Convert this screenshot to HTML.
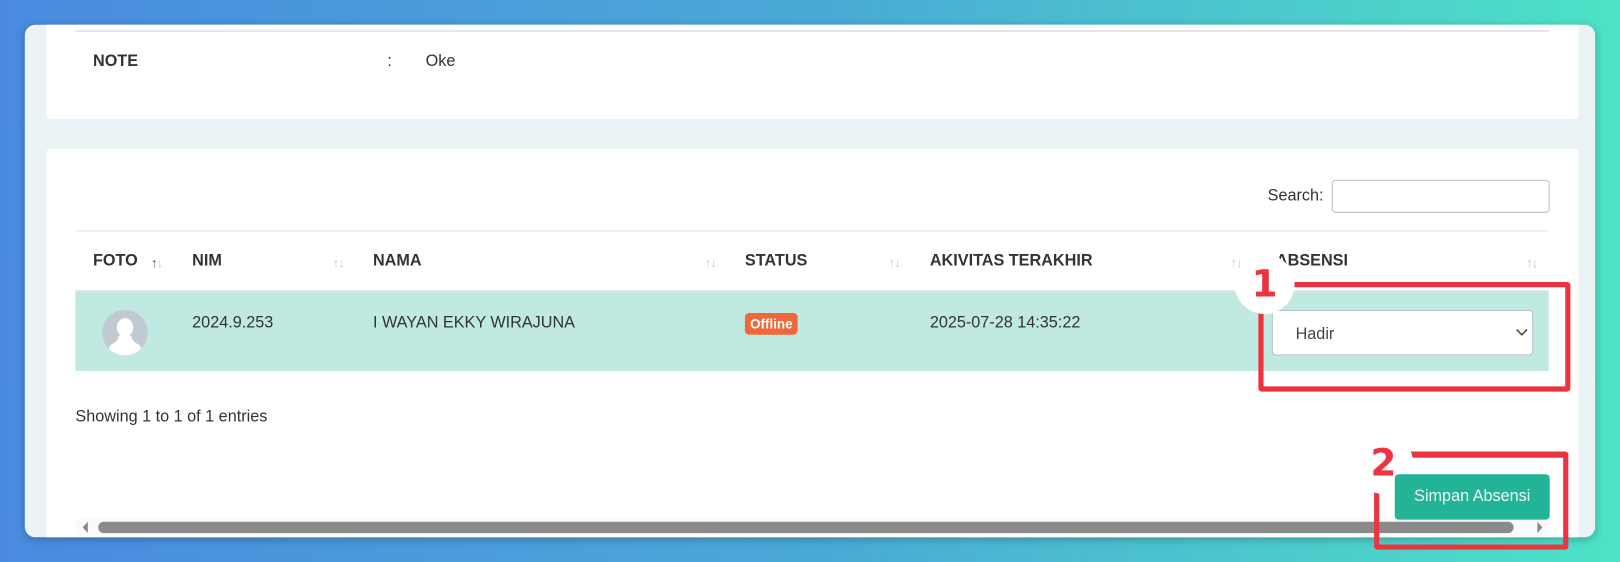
<!DOCTYPE html>
<html><head><meta charset="utf-8"><style>
*{box-sizing:border-box;margin:0;padding:0}
html,body{width:1620px;height:562px;overflow:hidden}
body{position:relative;background:linear-gradient(90deg,#4a8be0 0%,#4aa9d6 50%,#4de2c6 100%);font-family:"Liberation Sans",sans-serif;color:#333}
#s{position:absolute;left:0;top:0;width:1568px;height:544px;transform:scale(1.03316);transform-origin:0 0}
.win{position:absolute;left:24px;top:24px;width:1520px;height:496px;background:#ebf2f6;border-radius:10px;overflow:hidden;box-shadow:0 2px 8px rgba(0,0,0,.25)}
.card{position:absolute;background:#fff;border-radius:4px;left:21px;width:1483px}
.abs{position:absolute}
.b{font-weight:bold;font-size:15.7px}
.t{font-size:15.7px}
.arr{position:absolute;font-size:13px;color:#ccc;letter-spacing:-1px}
</style></head><body><div id="s">
<div class="win">
 <div class="card" style="top:-10px;height:101px">
  <div class="abs" style="left:28px;top:15px;width:1426px;height:2px;background:#e2e6ea"></div>
  <div class="abs b" style="left:45px;top:37px">NOTE</div>
  <div class="abs t" style="left:330px;top:37px">:</div>
  <div class="abs t" style="left:367px;top:37px">Oke</div>
 </div>
 <div class="card" style="top:120px;height:400px">
  <div class="abs t" style="left:1182px;top:37px">Search:</div>
  <div class="abs" style="left:1244px;top:30px;width:211px;height:32px;border:1px solid #b8c0c8;border-radius:4px"></div>
  <div class="abs" style="left:28px;top:79px;width:1426px;height:1px;background:#dee2e6"></div>
  <div class="abs b" style="left:45px;top:100px">FOTO</div><div class="arr" style="left:101px;top:103px;color:#555">↑<span style="color:#ccc">↓</span></div>
  <div class="abs b" style="left:141px;top:100px">NIM</div><div class="arr" style="left:277px;top:103px">↑↓</div>
  <div class="abs b" style="left:316px;top:100px">NAMA</div><div class="arr" style="left:637px;top:103px">↑↓</div>
  <div class="abs b" style="left:676px;top:100px">STATUS</div><div class="arr" style="left:815px;top:103px">↑↓</div>
  <div class="abs b" style="left:855px;top:100px">AKIVITAS TERAKHIR</div><div class="arr" style="left:1146px;top:103px">↑↓</div>
  <div class="abs b" style="left:1190px;top:100px">ABSENSI</div><div class="arr" style="left:1432px;top:103px">↑↓</div>
  <div class="abs" style="left:28px;top:137px;width:1426px;height:78px;background:#c0e9e1;border-top:2px solid #dee2e6"></div>
  <div class="abs" style="left:54px;top:156px;width:44px;height:44px;border-radius:50%;background:#c1cad3;overflow:hidden">
   <svg width="44" height="44" viewBox="0 0 44 44"><ellipse cx="22" cy="17" rx="8" ry="9" fill="#fff"/><path d="M16 25 Q16 30 8 34 Q6 36 6 44 L38 44 Q38 36 36 34 Q28 30 28 25 Z" fill="#fff"/></svg>
  </div>
  <div class="abs t" style="left:141px;top:160px">2024.9.253</div>
  <div class="abs t" style="left:316px;top:160px">I WAYAN EKKY WIRAJUNA</div>
  <div class="abs" style="left:676px;top:159px;background:#ef6839;color:#fff;font-weight:bold;font-size:13px;padding:3px 5px;border-radius:4px">Offline</div>
  <div class="abs t" style="left:855px;top:160px">2025-07-28 14:35:22</div>
  <div class="abs" style="left:1186px;top:156px;width:253px;height:44px;background:#fff;border:1px solid #b8c0c8;border-radius:4px;font-size:15.7px;color:#444;padding:14px 22px">Hadir<svg style="position:absolute;right:4px;top:17px" width="12" height="8" viewBox="0 0 12 8"><path d="M1 1 L6 6 L11 1" stroke="#444" stroke-width="1.5" fill="none"/></svg></div>
  <div class="abs t" style="left:28px;top:251px">Showing 1 to 1 of 1 entries</div>
  <div class="abs" style="left:28px;top:358px;width:1426px;height:16px;background:#fafafa"></div>
  <div class="abs" style="left:50px;top:361px;width:1370px;height:11px;background:#8a8a8a;border-radius:6px"></div>
  <svg class="abs" style="left:34px;top:361px" width="8" height="11"><path d="M6 0 L1 5.5 L6 11Z" fill="#888"/></svg>
  <svg class="abs" style="left:1442px;top:361px" width="8" height="11"><path d="M1 0 L6 5.5 L1 11Z" fill="#888"/></svg>
 </div>
</div>
<div class="abs" style="left:1218px;top:273px;width:302px;height:106px;border:5px solid #ee3340;border-radius:3px"></div>
<div class="abs" style="left:1195px;top:246px;width:58px;height:58px;border-radius:50%;background:#fff;color:#ee3340;font-weight:bold;font-size:36px;text-align:center;line-height:60px;font-family:'DejaVu Sans',sans-serif">1</div>
<div class="abs" style="left:1330px;top:437px;width:188px;height:95px;border:5px solid #ee3340;border-radius:3px;border-top-width:6px"></div>
<div class="abs" style="left:1310px;top:420px;width:58px;height:58px;border-radius:50%;background:#fff;color:#ee3340;font-weight:bold;font-size:36px;text-align:center;line-height:58px;font-family:'DejaVu Sans',sans-serif">2</div>
<div class="abs" style="left:1350px;top:459px;width:150px;height:44px;background:#23b397;color:#eafaf5;font-size:15.7px;border-radius:4px;text-align:center;line-height:44px">Simpan Absensi</div>
</div></body></html>
